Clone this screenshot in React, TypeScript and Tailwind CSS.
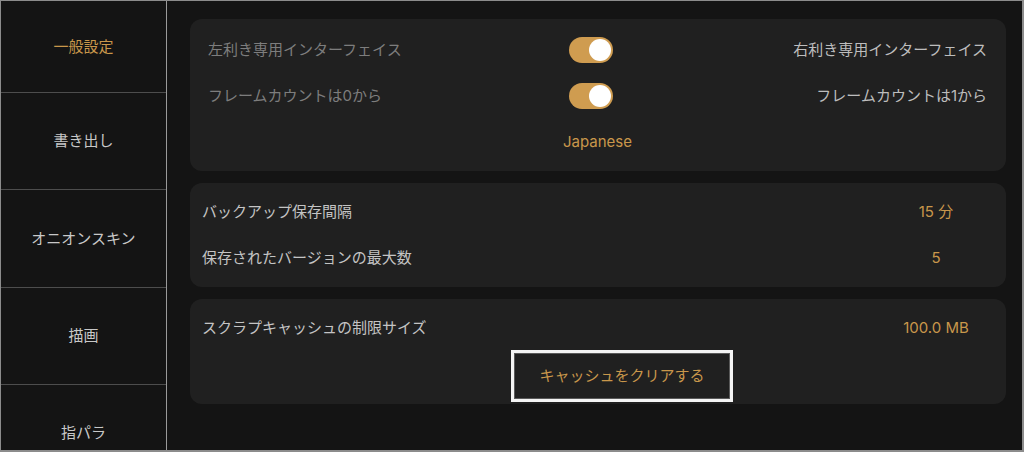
import React from "react";

const font = { fontFamily: '"Inter", "Noto Sans CJK JP", sans-serif' };

function Toggle() {
  return (
    <div className="w-[44px] h-[26px] rounded-full bg-[#cf9c50] flex items-center justify-end px-[2px]">
      <div className="w-[22px] h-[22px] rounded-full bg-white" />
    </div>
  );
}

const navItems = [
  { label: "一般設定", active: true, h: "h-[92px]" },
  { label: "書き出し", h: "h-[97px]" },
  { label: "オニオンスキン", h: "h-[98px]" },
  { label: "描画", h: "h-[97px]" },
  { label: "指パラ", h: "h-[97px]" },
];

export default function App() {
  return (
    <div
      className="w-[1024px] h-[452px] flex bg-[#141414] border-t border-l border-r-2 border-b-2 border-[#8c8c8c] overflow-hidden text-[15px] leading-[20px]"
      style={font}
    >
      <aside className="w-[166px] shrink-0 border-r border-[#9a9a9a] flex flex-col">
        {navItems.map((it) => (
          <div
            key={it.label}
            className={`${it.h} shrink-0 flex items-center justify-center border-b border-[#4d4d4d] ${
              it.active ? "text-[#c9974b]" : "text-[#c8c8c8]"
            }`}
          >
            {it.label}
          </div>
        ))}
      </aside>

      <main className="flex-1 pl-[23px] pr-[16px] pt-[18px] flex flex-col gap-[12px]">
        <section className="h-[152px] rounded-[12px] bg-[#202020] pl-[18px] pr-[19px] pt-[18px] flex flex-col">
          <div className="grid grid-cols-[361px_44px_1fr] items-center h-[26px]">
            <span className="text-[#7d7d7d]">左利き専用インターフェイス</span>
            <Toggle />
            <span className="text-right text-[#bdbdbd]">右利き専用インターフェイス</span>
          </div>
          <div className="grid grid-cols-[361px_44px_1fr] items-center h-[26px] mt-[20px]">
            <span className="text-[#7d7d7d]">フレームカウントは0から</span>
            <Toggle />
            <span className="text-right text-[#bdbdbd]">フレームカウントは1から</span>
          </div>
          <div className="mt-[23px] text-center text-[#c9974b]">Japanese</div>
        </section>

        <section className="h-[104px] rounded-[12px] bg-[#202020] pl-[12px] pr-[20px] pt-[19px] flex flex-col gap-[26px]">
          <div className="grid grid-cols-[1fr_100px] items-center">
            <span className="text-[#c4c4c4]">バックアップ保存間隔</span>
            <span className="text-center text-[#c9974b]">15 分</span>
          </div>
          <div className="grid grid-cols-[1fr_100px] items-center">
            <span className="text-[#c4c4c4]">保存されたバージョンの最大数</span>
            <span className="text-center text-[#c9974b]">5</span>
          </div>
        </section>

        <section className="h-[105px] rounded-[12px] bg-[#202020] pl-[12px] pr-[20px] pt-[19px] flex flex-col">
          <div className="grid grid-cols-[1fr_100px] items-center">
            <span className="text-[#c4c4c4]">スクラプキャッシュの制限サイズ</span>
            <span className="text-center text-[#c9974b]">100.0 MB</span>
          </div>
          <button className="mt-[12px] ml-[309px] w-[222px] h-[52px] border-[3px] border-[#f4f4f4] bg-[#202020] outline outline-1 -outline-offset-[4px] outline-[#5a5a5a] text-[#c9974b] flex items-center justify-center">
            キャッシュをクリアする
          </button>
        </section>
      </main>
    </div>
  );
}
